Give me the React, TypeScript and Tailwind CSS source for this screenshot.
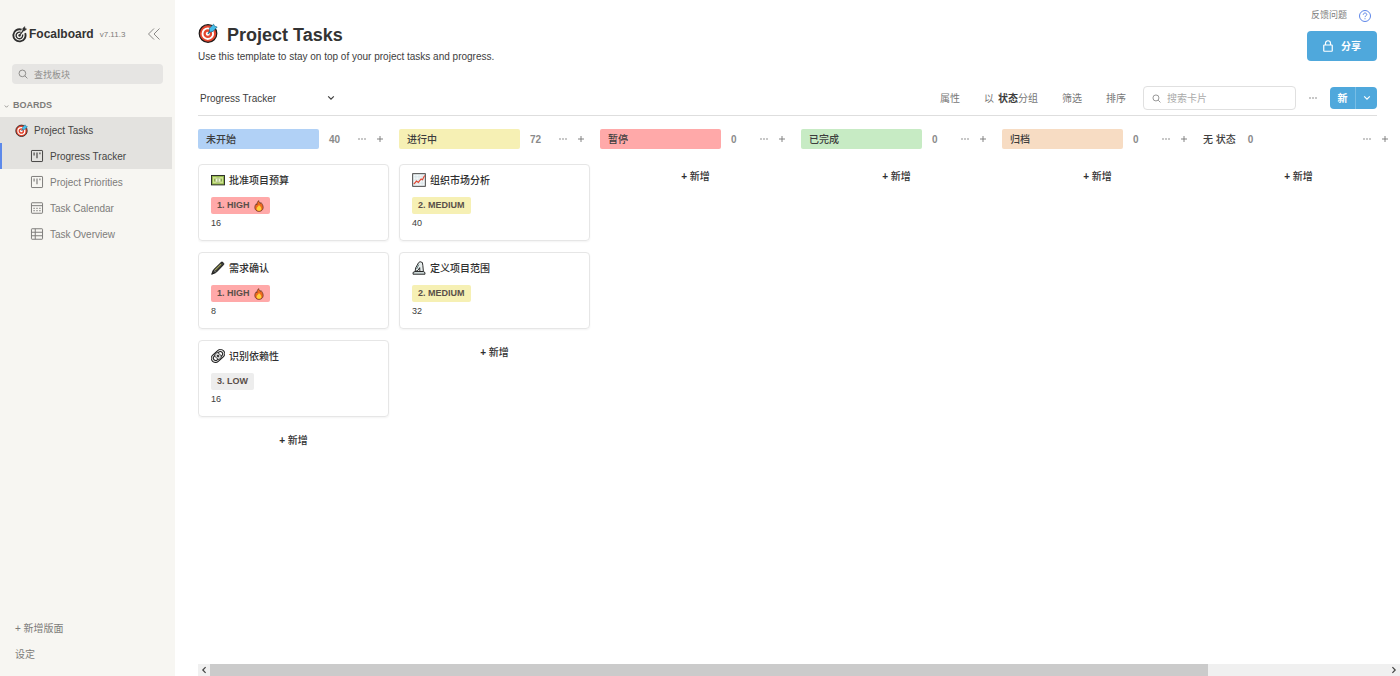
import type { ReactNode } from "react";

type Icon = () => ReactNode;

type Card = {
  icon: Icon;
  title: string;
  priority: string;
  hot?: boolean;
  color: string;
  hours: number;
};

type Column = {
  name: string;
  color: string;
  total: number;
  cards: Card[];
};

const DartIcon = ({ className }: { className: string }) => (
  <svg viewBox="0 0 20 20" className={className} aria-hidden="true">
    <circle cx="10" cy="10.5" r="8.8" fill="#e4472f" stroke="#1d1a1a" strokeWidth="1.2" />
    <circle cx="9.8" cy="10.7" r="5.3" fill="#e4472f" stroke="#fff" strokeWidth="1.9" />
    <circle cx="9.8" cy="10.7" r="2" fill="#fff" />
    <path d="M9.8 10.7 13 7.500" stroke="#1f6d8f" strokeWidth="1.4" />
    <path d="M11.600 9.200 11.400 5.200 15.600 1.200l1 2 2.600.800-4.200 4.400z" fill="#45bdea" stroke="#1b5f7c" strokeWidth=".6" />
  </svg>
);

const LogoIcon = () => (
  <svg viewBox="0 0 32 36" className="h-[17px] w-[15px] shrink-0" fill="none" stroke="#2f2f2f" aria-hidden="true">
    <path d="M20.5 7.6A13 13 0 1 0 28 15" strokeWidth="4" />
    <path d="M18.5 13.5A7 7 0 1 0 22.5 18" strokeWidth="3" />
    <circle cx="16" cy="20" r="2.2" fill="#2f2f2f" />
    <path d="M16 20 25 8" strokeWidth="2.6" />
    <path d="M23 10V5l4-4 .8 4 3.4 1-4 4z" fill="#2f2f2f" />
  </svg>
);

const MoneyIcon = () => (
  <svg viewBox="0 0 20 20" className="size-[14px]" aria-hidden="true">
    <rect x=".7" y="3.5" width="18.600" height="13.500" fill="#93b84c" stroke="#222" strokeWidth="1.3" />
    <rect x="2.8" y="5.6" width="14.4" height="9.200" fill="#cfe38f" />
    <circle cx="10" cy="10.200" r="3.8" fill="#eef5d2" stroke="#8fae55" strokeWidth=".8" />
    <path d="M10 7v6.400M5 8.200v4M15 8.200v4" stroke="#6f9140" strokeWidth="1" />
  </svg>
);

const ChartIcon = () => (
  <svg viewBox="0 0 20 20" className="size-[14px]" fill="none" aria-hidden="true">
    <rect x="1" y="1" width="18" height="18" fill="#f4f8f9" stroke="#333" strokeWidth="1.3" />
    <path d="M5.5 1.5v17M10 1.5v17M14.5 1.5v17M1.5 5.5h17M1.5 10h17M1.5 14.5h17" stroke="#cddbe0" strokeWidth=".8" />
    <path d="m2.5 16 4-4.5 2.5 2 4-5 2 1 3-6" stroke="#e0442e" strokeWidth="1.6" />
  </svg>
);

const PenIcon = () => (
  <svg viewBox="0 0 20 20" className="size-[14px]" aria-hidden="true">
    <path d="M1 19 3.3 13 14.6 1.9c1.5-1.3 4.6 1.4 3.4 3.3L7.2 16.4z" fill="#3b3c38" stroke="#111" strokeWidth="1.3" />
    <path d="m5.8 13.1 8.6-8.5" stroke="#a8a95a" strokeWidth="1.6" />
    <path d="m4.3 13.4 2.4 2.4" stroke="#bbb" />
  </svg>
);

const MicroscopeIcon = () => (
  <svg viewBox="0 0 20 20" className="size-[14px]" fill="none" stroke="#1c1c1c" strokeWidth="1.3" aria-hidden="true">
    <path d="M4.500 15 5.200 10 9.300 2.500 11.500 1l3.300 1.200.7 4.300.8 8.500h-5l-.3-5.500-2.500 4z" fill="#e8eeee" />
    <path d="M1.500 18.900v-2.600l2.800-1.300h12l2.200 1.500v2.400z" fill="#cdd8d8" />
    <path d="m9.800 5-3.300 6.500" stroke="#537071" />
  </svg>
);

const ChainIcon = () => (
  <svg viewBox="0 0 20 20" className="size-[14px]" fill="none" aria-hidden="true">
    <g transform="rotate(-42 10 10)">
      <rect x="-.8" y="4" width="21.600" height="12" rx="6" stroke="#1c1c1c" strokeWidth="1.4" fill="#ddd" />
      <rect x="2.200" y="6.700" width="15.600" height="6.600" rx="3.300" stroke="#1c1c1c" strokeWidth="1.4" fill="#fff" />
      <rect x="6.5" y="5" width="7" height="10" rx="3" stroke="#1c1c1c" strokeWidth="1.1" fill="#d5d5d5" />
      <circle cx="10" cy="10" r="1.700" fill="#333" />
    </g>
  </svg>
);

const FireIcon = () => (
  <svg viewBox="0 0 16 20" className="h-3 w-[10px]" aria-hidden="true">
    <path
      d="M7.400 1c.5 2.600 1.700 3.400 3 4.800.5-.5.6-1.200.6-1.800 2.500 2.500 4 5.500 4 8.500 0 4-3 6.500-7 6.500s-7-2.500-7-6.500c0-2.800 1.200-4.800 2.500-6.200.1 1 .4 1.500 1 2C4.600 5.500 5.500 2.800 7.400 1z"
      fill="#ef6a1f"
      stroke="#4a261a"
      strokeWidth="1"
    />
    <path d="M8 8.500c2 2 4 4 4 6 0 2.300-1.800 3.500-4 3.500s-4-1.200-4-3.500c0-2 2.500-3 4-6z" fill="#ffd03a" />
  </svg>
);

const BoardIcon = () => (
  <svg viewBox="0 0 24 24" className="size-[14px]" fill="none" stroke="currentColor" strokeWidth="1.7" aria-hidden="true">
    <rect x="2.500" y="2.500" width="19" height="19" rx="1" />
    <path d="M7 6v5M12 6v10M17 6v3" strokeWidth="2" />
  </svg>
);

const CalendarIcon = () => (
  <svg viewBox="0 0 24 24" className="size-[14px]" fill="none" stroke="currentColor" strokeWidth="1.7" aria-hidden="true">
    <rect x="2.500" y="3" width="19" height="18" rx="1" />
    <path d="M2.500 8h19" />
    <path d="M6 12.500h12M6 16.500h12" strokeWidth="2" strokeDasharray="2 3" />
  </svg>
);

const TableIcon = () => (
  <svg viewBox="0 0 24 24" className="size-[14px]" fill="none" stroke="currentColor" strokeWidth="1.7" aria-hidden="true">
    <rect x="2.500" y="3" width="19" height="18" rx="1" />
    <path d="M2.500 9h19M2.500 15h19M9 3v18" />
  </svg>
);

const SearchIcon = ({ className }: { className: string }) => (
  <svg viewBox="0 0 24 24" className={className} fill="none" stroke="currentColor" strokeWidth="2" aria-hidden="true">
    <circle cx="10.500" cy="10.500" r="8" />
    <path d="m16.500 16.500 6 6" />
  </svg>
);

const ChevronIcon = ({ className }: { className: string }) => (
  <svg viewBox="0 0 10 10" className={className} fill="none" stroke="currentColor" strokeWidth="1.5" aria-hidden="true">
    <path d="m1.500 3 3.500 3.500L8.500 3" />
  </svg>
);

const DotsIcon = () => (
  <svg viewBox="0 0 8 8" className="size-2" fill="currentColor" aria-hidden="true">
    <circle cx="1" cy="4" r=".75" />
    <circle cx="4" cy="4" r=".75" />
    <circle cx="7" cy="4" r=".75" />
  </svg>
);

const PlusIcon = () => (
  <svg viewBox="0 0 8 8" className="size-2" fill="none" stroke="currentColor" strokeWidth=".9" aria-hidden="true">
    <path d="M4 1v6M1 4h6" />
  </svg>
);

const views = [
  { name: "Progress Tracker", icon: BoardIcon, active: true },
  { name: "Project Priorities", icon: BoardIcon, active: false },
  { name: "Task Calendar", icon: CalendarIcon, active: false },
  { name: "Task Overview", icon: TableIcon, active: false },
];

const columns: Column[] = [
  {
    name: "未开始",
    color: "bg-[#b1d1f6]",
    total: 40,
    cards: [
      { icon: MoneyIcon, title: "批准项目预算", priority: "1. HIGH", hot: true, color: "bg-[#ffa9a9]", hours: 16 },
      { icon: PenIcon, title: "需求确认", priority: "1. HIGH", hot: true, color: "bg-[#ffa9a9]", hours: 8 },
      { icon: ChainIcon, title: "识别依赖性", priority: "3. LOW", color: "bg-[#ededed]", hours: 16 },
    ],
  },
  {
    name: "进行中",
    color: "bg-[#f6f0b4]",
    total: 72,
    cards: [
      { icon: ChartIcon, title: "组织市场分析", priority: "2. MEDIUM", color: "bg-[#f6f0b4]", hours: 40 },
      { icon: MicroscopeIcon, title: "定义项目范围", priority: "2. MEDIUM", color: "bg-[#f6f0b4]", hours: 32 },
    ],
  },
  { name: "暂停", color: "bg-[#ffa9a9]", total: 0, cards: [] },
  { name: "已完成", color: "bg-[#c7ebc4]", total: 0, cards: [] },
  { name: "归档", color: "bg-[#f7dcc3]", total: 0, cards: [] },
  { name: "无 状态", color: "", total: 0, cards: [] },
];

function Sidebar() {
  return (
    <aside className="flex w-[175px] shrink-0 flex-col bg-[#f7f6f2] text-[10px] text-[#7d7c7a]">
      <div className="mt-6 flex h-5 items-center pr-3.5 pl-3">
        <LogoIcon />
        <span className="ml-0.5 text-xs font-bold text-[#333]">Focalboard</span>
        <span className="mt-0.5 ml-1.5 text-[8px]">v7.11.3</span>
        <button type="button" aria-label="Hide sidebar" className="ml-auto text-[#8b8a88]">
          <svg viewBox="0 0 14 14" className="size-[14px]" fill="none" stroke="currentColor" aria-hidden="true">
            <path d="M7 1.500 1.500 7 7 12.500M12.500 1.500 7 7l5.500 5.500" />
          </svg>
        </button>
      </div>

      <label className="mx-3 mt-5 flex h-5 items-center gap-1.5 rounded-sm bg-[#e6e5e3] px-1.5">
        <SearchIcon className="size-[10px] shrink-0" />
        <input
          aria-label="查找板块"
          placeholder="查找板块"
          className="h-full w-full min-w-0 bg-transparent pt-px text-[9px] outline-none placeholder:text-[#8f8e8c]"
        />
      </label>

      <button type="button" className="mt-3 flex h-5 items-center gap-1 pl-1 text-[9px] font-bold">
        <ChevronIcon className="size-[5px]" />
        BOARDS
      </button>

      <nav className="mt-px mr-[3px] flex flex-col">
        <a href="#board" className="flex h-[26px] items-center gap-1.5 bg-[#e3e2df] pl-[15px] text-[#464544]">
          <DartIcon className="size-[13px]" />
          Project Tasks
        </a>
        {views.map((v) => (
          <a
            key={v.name}
            href="#view"
            className={
              v.active
                ? "flex h-[26px] items-center gap-1.5 border-l-2 border-[#5d89ea] bg-[#e3e2df] pl-7 text-[#464544]"
                : "flex h-[26px] items-center gap-1.5 border-l-2 border-transparent pl-7"
            }
          >
            <v.icon />
            {v.name}
          </a>
        ))}
      </nav>

      <div className="mt-auto mb-[9px] flex flex-col items-start pl-[15px]">
        <button type="button" className="h-[26px]">+ 新增版面</button>
        <button type="button" className="h-[26px]">设定</button>
      </div>
    </aside>
  );
}

function BoardHeader() {
  return (
    <header className="flex justify-between pr-[23px]">
      <div className="pt-[22px]">
        <div className="flex h-[26px] items-center gap-[9px]">
          <DartIcon className="mb-1 size-5" />
          <h1 className="text-lg leading-6 font-bold text-[#333]">Project Tasks</h1>
        </div>
        <p className="mt-px text-[10px] leading-4 text-[#3d3d3d]">
          Use this template to stay on top of your project tasks and progress.
        </p>
      </div>
      <div className="flex flex-col items-end pt-2">
        <div className="flex h-4 items-center gap-3 pr-1.5">
          <a href="#feedback" className="text-[9px] text-[#7c7c7c]">反馈问题</a>
          <button type="button" aria-label="Help" className="text-[#5d86e8]">
            <svg viewBox="0 0 24 24" className="size-3" fill="none" stroke="currentColor" strokeWidth="2" aria-hidden="true">
              <circle cx="12" cy="12" r="11" />
              <path d="M8.500 9.500c0-2 1.500-3.500 3.500-3.500s3.500 1.400 3.500 3.200c0 2.300-3.500 2.500-3.500 5M12 16.500v2" />
            </svg>
          </button>
        </div>
        <button
          type="button"
          className="mt-[7px] flex h-[30px] items-center gap-2 rounded-sm bg-[#4fa8dc] px-4 text-[10px] font-bold text-white"
        >
          <svg viewBox="0 0 20 24" className="h-3 w-[10px]" fill="none" stroke="currentColor" strokeWidth="2.4" aria-hidden="true">
            <rect x="1.500" y="10" width="17" height="12.500" rx="1" />
            <path d="M5 10V6.500a5 5 0 0 1 10 0V10" />
          </svg>
          分享
        </button>
      </div>
    </header>
  );
}

function Toolbar() {
  return (
    <div className="mt-4 mr-[23px] flex h-[35px] items-center border-b border-[#dedede] text-[10px] text-[#777]">
      <input
        aria-label="View name"
        defaultValue="Progress Tracker"
        className="ml-0.5 w-[127px] bg-transparent text-[#3d3d3d] outline-none"
      />
      <button type="button" aria-label="Switch view" className="text-[#3d3d3d]">
        <ChevronIcon className="size-2" />
      </button>
      <div className="ml-auto flex items-center gap-6">
        <button type="button">属性</button>
        <button type="button" className="flex gap-1">
          以
          <span>
            <span className="font-bold text-[#3d3d3d]">状态</span>分组
          </span>
        </button>
        <button type="button">筛选</button>
        <button type="button">排序</button>
      </div>
      <label className="ml-[17px] flex h-6 w-[153px] items-center gap-1.5 rounded-sm border border-[#e0e0e0] px-2">
        <SearchIcon className="size-[9px] shrink-0" />
        <input
          aria-label="搜索卡片"
          placeholder="搜索卡片"
          className="w-full min-w-0 bg-transparent outline-none placeholder:text-[#aaa]"
        />
      </label>
      <button type="button" aria-label="View options" className="mx-[13px]">
        <DotsIcon />
      </button>
      <div className="flex h-[22px] overflow-hidden rounded-sm bg-[#4fa8dc] text-white">
        <button type="button" className="w-[26px] border-r border-[#78bde5] font-bold">新</button>
        <button type="button" aria-label="More templates" className="flex w-[21px] items-center justify-center">
          <ChevronIcon className="size-2" />
        </button>
      </div>
    </div>
  );
}

function BoardCard({ card }: { card: Card }) {
  return (
    <article className="flex h-[77px] flex-col items-start rounded-sm border border-[#e6e6e6] px-3 pt-[7px] shadow-xs">
      <div className="flex h-4 items-center gap-1 text-[10px] font-medium text-[#2f2f2f]">
        <card.icon />
        {card.title}
      </div>
      <div className={`mt-[9px] flex h-[17px] items-center gap-1 rounded-xs px-1.5 text-[9px] font-bold text-[#5a4f49] ${card.color}`}>
        {card.priority}
        {card.hot && <FireIcon />}
      </div>
      <div className="mt-[3px] text-[9px] leading-3 text-[#3d3d3d]">{card.hours}</div>
    </article>
  );
}

function BoardColumn({ column }: { column: Column }) {
  return (
    <section className="w-[191px] shrink-0">
      <div className="flex h-5 items-center text-[10px]">
        <div
          className={
            column.color
              ? `flex h-full w-[121px] items-center rounded-xs px-2 font-medium text-[#3d3d3d] ${column.color}`
              : "font-medium text-[#3d3d3d]"
          }
        >
          {column.name}
        </div>
        <span className={column.color ? "ml-[10px] font-bold text-[#8a8a8a]" : "ml-3 font-bold text-[#8a8a8a]"}>
          {column.total}
        </span>
        <div className="mr-[5px] ml-auto flex items-center gap-[10px] text-[#777]">
          <button type="button" aria-label={`${column.name} options`}>
            <DotsIcon />
          </button>
          <button type="button" aria-label={`Add to ${column.name}`}>
            <PlusIcon />
          </button>
        </div>
      </div>
      <div className="mt-[15px] flex flex-col items-stretch gap-[11px]">
        {column.cards.map((c) => (
          <BoardCard key={c.title} card={c} />
        ))}
        <button type="button" className="h-6 text-[10px] font-medium text-[#2f2f2f]">
          <span className="font-bold">+</span> 新增
        </button>
      </div>
    </section>
  );
}

export default function App() {
  return (
    <div className="flex h-screen overflow-hidden bg-white font-['Liberation_Sans','Noto_Sans_CJK_SC',sans-serif]">
      <Sidebar />
      <main className="flex min-w-0 flex-1 flex-col pl-[23px]">
        <BoardHeader />
        <Toolbar />
        <div className="mt-[13px] flex min-h-0 flex-1 gap-[10px] overflow-hidden">
          {columns.map((c) => (
            <BoardColumn key={c.name} column={c} />
          ))}
        </div>
        <div className="flex h-3 items-center bg-[#f0f0f0] text-[#444]">
          <button type="button" aria-label="Scroll left" className="flex w-3 justify-center">
            <ChevronIcon className="size-2 rotate-90" />
          </button>
          <div className="h-full w-[83%] bg-[#cbcbcb]" />
          <button type="button" aria-label="Scroll right" className="ml-auto flex w-3 justify-center">
            <ChevronIcon className="size-2 -rotate-90" />
          </button>
        </div>
      </main>
    </div>
  );
}
